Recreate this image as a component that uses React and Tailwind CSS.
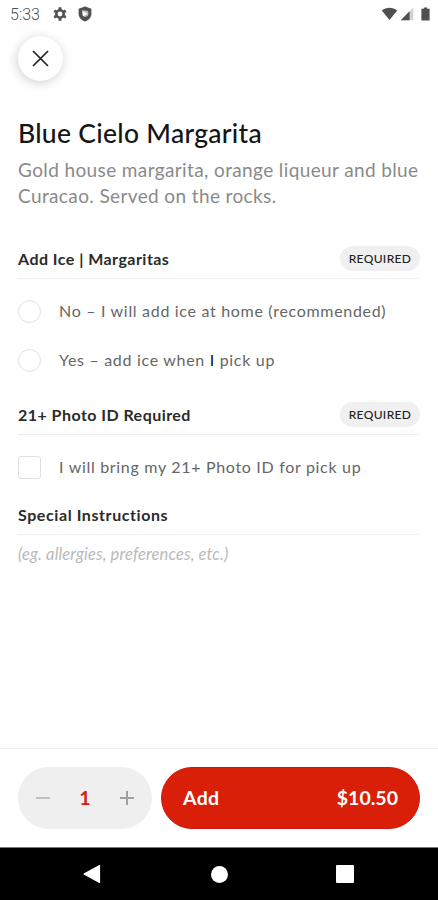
import React from "react";

function StatusBar() {
  return (
    <div className="flex h-7 shrink-0 items-center justify-between pl-[10px] pr-[8px] text-[#505050]">
      <div className="flex items-center">
        <span className="w-[43px] pt-[2px] font-['Roboto',sans-serif] text-[16px] font-light leading-none">5:33</span>
        <svg width="14" height="14" viewBox="0 0 14 14" className="block">
          <circle cx="7" cy="7" r="3.7" fill="none" stroke="currentColor" strokeWidth="2.5" />
          <g stroke="currentColor" strokeWidth="2.9">
            <path d="M7 .3v2.2M7 11.5v2.2M1.2 3.65l1.9 1.1M10.9 9.25l1.9 1.1M1.2 10.35l1.9-1.1M10.9 4.75l1.9-1.1" />
          </g>
        </svg>
        <svg width="14" height="16" viewBox="0 0 14 16" className="ml-[11px] block">
          <path d="M7 .6 13.4 2.8V7.4C13.4 11.2 10.6 14.2 7 15.4 3.4 14.2.6 11.2.6 7.4V2.8Z" fill="currentColor" />
          <path d="M4 4.2 7.2 4.4A3.1 3.1 0 0 1 10.5 7.6C10.5 9.6 9 10.9 7.2 10.9 5.2 10.9 4 9.5 4 7.6Z" fill="#bdbdbd" />
          <path d="M5 5.2 9.6 7.7 5 10.2Z" fill="#fff" />
        </svg>
      </div>
      <div className="flex items-center">
        <svg width="17" height="14" viewBox="0 0 17 14" className="block">
          <path d="M.8 3.6C5.2-.2 11.8-.2 16.2 3.6L8.5 13Z" fill="currentColor" />
        </svg>
        <svg width="14" height="14" viewBox="0 0 14 14" className="ml-[2px] block">
          <path d="M13.3.6V13.2H.7Z" fill="#d2d2d2" />
          <path d="M9.6 4.3V13.2H.7Z" fill="currentColor" />
        </svg>
        <svg width="9" height="14" viewBox="0 0 9 14" className="ml-[7px] block">
          <path d="M2.8.4h3.4v1.4H8.6v11.8H.4V1.8h2.4Z" fill="currentColor" />
        </svg>
      </div>
    </div>
  );
}

function SectionHeader({ children, required, tracking = "tracking-[0.46px]" }) {
  return (
    <div className="flex h-10 items-center justify-between border-b border-[#eeeeee]">
      <h2 className={`whitespace-nowrap text-[16px] font-bold leading-5 text-[#2b2b2b] ${tracking}`}>{children}</h2>
      {required && (
        <span className="flex h-[25px] w-[80px] items-center justify-center rounded-full bg-[#f0f0f0] text-[12px] font-medium tracking-[0.35px] text-[#222]">
          REQUIRED
        </span>
      )}
    </div>
  );
}

function Option({ children, square }) {
  return (
    <div className="flex h-[49px] items-center">
      <span
        className={
          square
            ? "size-[23px] rounded-[3px] border-[1.5px] border-[#e0e0e0]"
            : "size-[23px] rounded-full border-[1.5px] border-[#e0e0e0]"
        }
      />
      <span className="ml-[18px] whitespace-nowrap pb-[2px] text-[16px] leading-5 tracking-[0.69px] text-[#666]">
        {children}
      </span>
    </div>
  );
}

export default function App() {
  return (
    <div className="flex h-[900px] w-[438px] flex-col overflow-hidden bg-white font-['Lato',sans-serif]">
      <StatusBar />
      <main className="flex flex-1 flex-col px-[18px] pt-2">
        <button className="flex size-[45px] items-center justify-center rounded-full bg-white shadow-[-1px_2px_11px_rgba(0,0,0,0.19)]">
          <svg width="17" height="17" viewBox="0 0 17 17" className="block">
            <path d="M1 1l15 15M16 1l-15 15" stroke="#222" strokeWidth="1.7" />
          </svg>
        </button>
        <h1 className="mt-9 whitespace-nowrap text-[26.5px] font-medium leading-8 tracking-[0.29px] text-[#151515]">
          Blue Cielo Margarita
        </h1>
        <p className="mt-[7.5px] whitespace-nowrap text-[19px] leading-[26.5px] tracking-[0.38px] text-[#8a8a8a]">
          Gold house margarita, orange liqueur and blue
          <br />
          Curacao. Served on the rocks.
        </p>
        <section className="mt-[29.5px]">
          <SectionHeader required>Add Ice | Margaritas</SectionHeader>
          <div className="pt-[8px]">
            <Option>No – I will add ice at home (recommended)</Option>
            <Option>
              Yes – add ice when <span className="text-[#111]">I</span> pick up
            </Option>
          </div>
        </section>
        <section className="mt-[10px]">
          <SectionHeader required>21+ Photo ID Required</SectionHeader>
          <div className="pt-[8px]">
            <Option square>I will bring my 21+ Photo ID for pick up</Option>
          </div>
        </section>
        <section className="mt-[3px]">
          <SectionHeader tracking="tracking-[0.58px]">Special Instructions</SectionHeader>
          <p className="mt-[9px] whitespace-nowrap text-[16.5px] italic leading-5 tracking-[0.13px] text-[#bababa]">
            (eg. allergies, preferences, etc.)
          </p>
        </section>
      </main>
      <footer className="flex h-[99px] shrink-0 gap-[9px] border-t border-[#eeeeee] px-[18px] pt-[18px]">
        <div className="flex h-[62px] w-[134px] items-center justify-between rounded-full bg-[#efefef] px-[18px]">
          <svg width="14" height="14" viewBox="0 0 14 14" className="block">
            <path d="M0 7h14" stroke="#c0c0c0" strokeWidth="2" />
          </svg>
          <span className="text-[19.5px] font-bold text-[#d31c17]">1</span>
          <svg width="14" height="14" viewBox="0 0 14 14" className="block">
            <path d="M0 7h14M7 0v14" stroke="#a0a0a0" strokeWidth="2" />
          </svg>
        </div>
        <button className="flex h-[62px] flex-1 items-center justify-between rounded-full border border-[#cf1510] bg-[#da1f08] px-[21px] text-[19.5px] font-bold text-white">
          <span className="tracking-[0.3px]">Add</span>
          <span>$10.50</span>
        </button>
      </footer>
      <nav className="flex h-[53px] shrink-0 items-center justify-between border-t border-[#777] bg-black pl-[83px] pr-[84px]">
        <svg width="18" height="20" viewBox="0 0 18 20" className="block">
          <path d="M1 10 16.5 1.5V18.5Z" fill="#fff" stroke="#fff" strokeWidth="1.2" strokeLinejoin="round" />
        </svg>
        <span className="ml-px size-[17px] rounded-full bg-white" />
        <span className="size-[18px] rounded-[1px] bg-white" />
      </nav>
    </div>
  );
}
